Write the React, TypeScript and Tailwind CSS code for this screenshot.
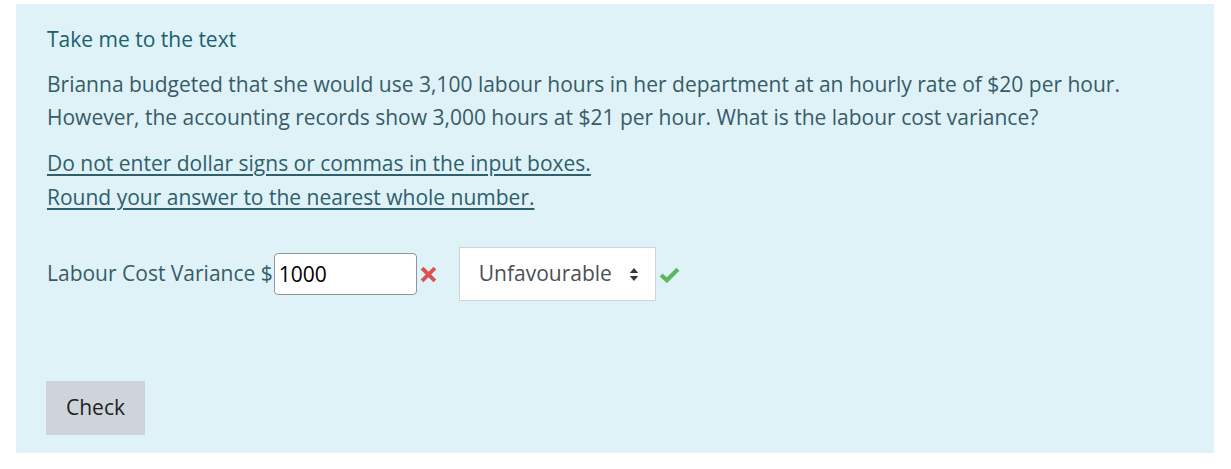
export default function App() {
  return (
    <div className="min-h-[469px] bg-white pt-1 pl-4 pr-[17px] pb-4 font-['Open_Sans',sans-serif]">
      <div className="bg-[#def2f8] h-[449px] pl-[31px] pt-5 flex flex-col text-[21px] text-[#385b67]">
        <a className="text-[#1a5f6e] leading-[30px]">Take me to the text</a>

        <p className="mt-[14px] leading-[33px]">
          Brianna budgeted that she would use 3,100 labour hours in her department at an hourly rate of $20 per hour.
          <br />
          However, the accounting records show 3,000 hours at $21 per hour. What is the labour cost variance?
        </p>

        <div className="mt-[12px] leading-[34px] underline underline-offset-[3px] text-[#2f5f6c]">
          <p>Do not enter dollar signs or commas in the input boxes.</p>
          <p>Round your answer to the nearest whole number.</p>
        </div>

        <div className="mt-[33px] flex items-center">
          <span>Labour Cost Variance $</span>
          <input
            className="ml-px w-[143px] h-[42px] border border-[#8f959b] rounded-[4px] bg-white px-1 text-black outline-none"
            defaultValue="1000"
          />
          <svg viewBox="0 0 20 20" className="ml-[3px] w-[17px] h-[17px]">
            <path d="M4 4L16 16M16 4L4 16" stroke="#d9534f" strokeWidth="4.5" strokeLinecap="square" />
          </svg>
          <div className="ml-[22px] h-[54px] w-[197px] border border-[#ced4da] bg-white flex items-center pl-[19px] pr-4 text-[#495057]">
            <span className="flex-1">Unfavourable</span>
            <svg viewBox="0 0 10 16" className="w-[10px] h-[15px]">
              <path d="M5 1L9.5 6.5H0.5Z M5 15L0.5 9.5H9.5Z" fill="#343a40" />
            </svg>
          </div>
          <svg viewBox="0 0 20 16" className="ml-[3px] w-[21px] h-[17px]">
            <path d="M2 8.5L7.5 13.5L18 3" stroke="#5cb85c" strokeWidth="4" fill="none" />
          </svg>
        </div>

        <button className="mt-[80px] self-start w-[99px] h-[54px] bg-[#ced4da] text-[#1d2125] ml-[-1px]">
          Check
        </button>
      </div>
    </div>
  );
}
